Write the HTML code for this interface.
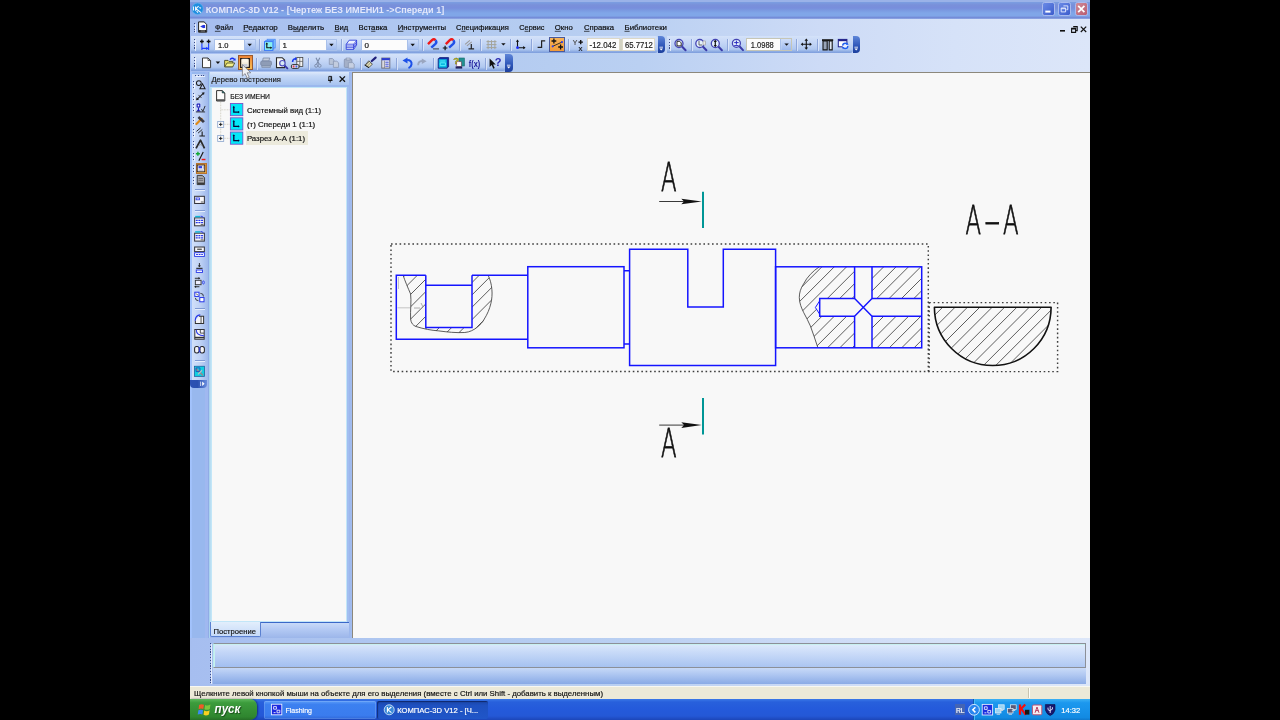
<!DOCTYPE html>
<html lang="ru">
<head>
<meta charset="utf-8">
<title>КОМПАС-3D V12</title>
<style>
html,body{margin:0;padding:0;background:#000;}
body{width:1280px;height:720px;overflow:hidden;position:relative;font-family:"Liberation Sans",sans-serif;font-size:8px;color:#000;}
.a{position:absolute;}
#title{left:190px;top:0;width:900px;height:19px;background:linear-gradient(to bottom,#9ab2e8 0,#9ab2e8 1.5px,#7b9ce0 2.5px,#7990da 5px,#788edc 8px,#7a98e0 10px,#80a6e8 13px,#80a6e8 16px,#748cd8 17.3px,#748cd8 18.2px,#a8c0ee 19px);}
#winbg{left:190px;top:19px;width:900px;height:667px;background:#a0baf0;}
#band{left:190px;top:19px;width:900px;height:53px;background:linear-gradient(to right,#a6bef0 0,#b2caf0 30%,#bad0f2 50%,#cddbf6 70%,#d6e2f8 85%,#dce6f9 100%);}
.tb{border-radius:0 3px 3px 0;background:linear-gradient(to bottom,#d4e2f9 0,#c4d6f6 40%,#b0c8f0 78%,#90aee4 90%,#7c9cdc 100%);}
.cap{border-radius:0 4px 4px 0;background:linear-gradient(to bottom,#5f86d8 0,#2c55b8 60%,#1c3f9c 100%);}
.inp{background:#fcfcfc;border:1px solid #a8c0ea;box-sizing:border-box;}
.dd{background:linear-gradient(to bottom,#cfdefa,#9db9ee);border:1px solid #a8c0ea;border-left:none;box-sizing:border-box;}
.sep{width:0.9px;background:#8ea6da;box-shadow:0.8px 0 0 #e0e9fb;}
.hsep{height:1px;background:#7f9ad4;box-shadow:0 1px 0 #e6eefc;}
.hot{background:#f8a848;border:1px solid #b86420;box-sizing:border-box;}
.grip{width:1.3px;background:repeating-linear-gradient(to bottom,#3c4c88 0,#3c4c88 1.3px,transparent 1.3px,transparent 2.8px);box-shadow:1px 1px 0 rgba(255,255,255,.7);}
.hgrip{height:1.3px;background:repeating-linear-gradient(to right,#3c4c88 0,#3c4c88 1.3px,transparent 1.3px,transparent 2.8px);box-shadow:1px 1px 0 rgba(255,255,255,.7);}
#left{left:190px;top:72px;width:20px;height:614px;background:linear-gradient(to right,#a2c2fc 0,#a2c2fc 1.4px,#98b8ee 2px,#98b8ee 14.5px,#a0b8f0 15px,#a0b8f0 18px,#90ace6 18.3px,#90ace6 19.2px,#a0c4ec 19.6px);}
#ltb{left:192px;top:74px;width:16px;height:308px;background:linear-gradient(to right,#d2e0f9 0,#bfd2f5 50%,#9fb9ec 100%);}
#draw{left:352.2px;top:72px;width:737.8px;height:566px;background:#f8f8f8;border-left:1px solid #8c887c;border-top:1px solid #8c887c;box-sizing:border-box;}
#status{left:190px;top:686px;width:900px;height:13px;background:#ece9d8;}
#task{left:190px;top:699px;width:900px;height:21px;background:linear-gradient(to bottom,#3a78e8 0,#2860dc 3px,#245adb 10px,#2458d6 17px,#1c46b8 21px);}
svg text{font-family:"Liberation Sans",sans-serif;}
</style>
</head>
<body>
<div class="a" id="title"></div>
<div class="a" id="winbg"></div>
<div class="a" id="band"></div>
<div class="a" id="left"></div>
<div class="a" id="ltb"></div>
<div class="a" id="draw"></div>
<div class="a" id="status"></div>
<div class="a" id="task"></div>
<div class="a " style="left:1041.8px;top:2.3px;width:13.3px;height:13.3px;border-radius:2.5px;border:1px solid #a9baee;box-sizing:border-box;background:linear-gradient(135deg,#6a8ae6,#3c5ccc);"></div>
<div class="a " style="left:1058.2px;top:2.3px;width:13.3px;height:13.3px;border-radius:2.5px;border:1px solid #a9baee;box-sizing:border-box;background:linear-gradient(135deg,#6a8ae6,#3c5ccc);"></div>
<div class="a " style="left:1074.6px;top:2.3px;width:13.3px;height:13.3px;border-radius:2.5px;border:1px solid #a9baee;box-sizing:border-box;background:linear-gradient(135deg,#d08a98,#b85c70);"></div>
<div class="a grip" style="left:193.5px;top:22.8px;width:1.3px;height:9.6px;"></div>
<div class="a tb" style="left:191px;top:35.8px;width:467px;height:17.5px;"></div>
<div class="a cap" style="left:657.5px;top:35.6px;width:7.5px;height:17.9px;"></div>
<div class="a tb" style="left:666.6px;top:35.8px;width:186.4px;height:17.5px;"></div>
<div class="a cap" style="left:852.5px;top:35.6px;width:7.5px;height:17.9px;"></div>
<div class="a tb" style="left:191px;top:53.7px;width:314.5px;height:17.8px;"></div>
<div class="a cap" style="left:505px;top:53.7px;width:7.5px;height:18px;"></div>
<div class="a grip" style="left:193.5px;top:39.4px;width:1.3px;height:10.4px;"></div>
<div class="a grip" style="left:668.6px;top:39.4px;width:1.3px;height:10.4px;"></div>
<div class="a grip" style="left:193.5px;top:57.4px;width:1.3px;height:10.4px;"></div>
<div class="a inp" style="left:214px;top:38.5px;width:30.5px;height:12.5px;"></div>
<div class="a dd" style="left:244.5px;top:38.5px;width:11px;height:12.5px;"></div>
<div class="a inp" style="left:278.5px;top:38.5px;width:48px;height:12.5px;"></div>
<div class="a dd" style="left:326.5px;top:38.5px;width:10.5px;height:12.5px;"></div>
<div class="a inp" style="left:360.5px;top:38.5px;width:47px;height:12.5px;"></div>
<div class="a dd" style="left:407.5px;top:38.5px;width:11px;height:12.5px;"></div>
<div class="a " style="left:619px;top:38.5px;width:4px;height:12.5px;background:#d2d2c2;"></div>
<div class="a inp" style="left:587px;top:37.9px;width:32.6px;height:13px;"></div>
<div class="a inp" style="left:622.4px;top:37.9px;width:32.6px;height:13px;"></div>
<div class="a inp" style="left:746.3px;top:37.6px;width:35.2px;height:13.6px;"></div>
<div class="a dd" style="left:781.5px;top:37.6px;width:10.8px;height:13.6px;"></div>
<div class="a " style="left:587px;top:37.9px;width:32.6px;height:13px;border:1px solid #dcd8c8;box-sizing:border-box;"></div>
<div class="a " style="left:622.4px;top:37.9px;width:32.6px;height:13px;border:1px solid #dcd8c8;box-sizing:border-box;"></div>
<div class="a " style="left:746.3px;top:37.6px;width:46px;height:13.6px;border:1px solid #c6c6b6;box-sizing:border-box;"></div>
<div class="a sep" style="left:259px;top:39px;width:1px;height:12px;"></div>
<div class="a sep" style="left:340.75px;top:39px;width:1px;height:12px;"></div>
<div class="a sep" style="left:422px;top:39px;width:1px;height:12px;"></div>
<div class="a sep" style="left:458.75px;top:39px;width:1px;height:12px;"></div>
<div class="a sep" style="left:479.5px;top:39px;width:1px;height:12px;"></div>
<div class="a sep" style="left:509.75px;top:39px;width:1px;height:12px;"></div>
<div class="a sep" style="left:531px;top:39px;width:1px;height:12px;"></div>
<div class="a sep" style="left:567.5px;top:39px;width:1px;height:12px;"></div>
<div class="a sep" style="left:690.5px;top:39px;width:1px;height:12px;"></div>
<div class="a sep" style="left:727px;top:39px;width:1px;height:12px;"></div>
<div class="a sep" style="left:796px;top:39px;width:1px;height:12px;"></div>
<div class="a sep" style="left:816.5px;top:39px;width:1px;height:12px;"></div>
<div class="a sep" style="left:256px;top:57.5px;width:1px;height:12px;"></div>
<div class="a sep" style="left:307.5px;top:57.5px;width:1px;height:12px;"></div>
<div class="a sep" style="left:359.5px;top:57.5px;width:1px;height:12px;"></div>
<div class="a sep" style="left:395.5px;top:57.5px;width:1px;height:12px;"></div>
<div class="a sep" style="left:432.5px;top:57.5px;width:1px;height:12px;"></div>
<div class="a sep" style="left:485px;top:57.5px;width:1px;height:12px;"></div>
<div class="a hot" style="left:549.4px;top:37.1px;width:15.4px;height:14.9px;border-color:#4a5a9c;background:linear-gradient(to bottom,#f8b458,#f09a3a);"></div>
<div class="a hot" style="left:237.6px;top:55.4px;width:15px;height:14.6px;border:0.6px solid #9a5a30;background:linear-gradient(to bottom,#ee8434 0,#f29a40 35%,#f8be54 100%);"></div>
<div class="a hgrip" style="left:194.7px;top:74.8px;width:9.8px;height:1.3px;"></div>
<div class="a grip" style="left:193.3px;top:81.1px;width:1px;height:7px;"></div>
<div class="a grip" style="left:193.3px;top:92.8px;width:1px;height:7px;"></div>
<div class="a grip" style="left:193.3px;top:104.39999999999999px;width:1px;height:7px;"></div>
<div class="a grip" style="left:193.3px;top:116.89999999999999px;width:1px;height:7px;"></div>
<div class="a grip" style="left:193.3px;top:128.6px;width:1px;height:7px;"></div>
<div class="a grip" style="left:193.3px;top:140.79999999999998px;width:1px;height:7px;"></div>
<div class="a grip" style="left:193.3px;top:152.79999999999998px;width:1px;height:7px;"></div>
<div class="a grip" style="left:193.3px;top:164.9px;width:1px;height:7px;"></div>
<div class="a grip" style="left:193.3px;top:176.6px;width:1px;height:7px;"></div>
<div class="a hot" style="left:195.7px;top:162.8px;width:11.2px;height:11.2px;border:0.7px solid #b8742c;background:linear-gradient(to bottom,#f09a38,#f8b84c);"></div>
<div class="a hsep" style="left:194.5px;top:189px;width:10px;height:1px;"></div>
<div class="a hsep" style="left:194.5px;top:210.2px;width:10px;height:1px;"></div>
<div class="a hsep" style="left:194.5px;top:308.4px;width:10px;height:1px;"></div>
<div class="a hsep" style="left:194.5px;top:360.4px;width:10px;height:1px;"></div>
<div class="a " style="left:190px;top:379.6px;width:17.2px;height:8.6px;border-radius:0 0 4px 4px;background:linear-gradient(to right,#2c52b4 0,#2a50b0 45%,#6a8ede 100%);"></div>
<div class="a " style="left:209.2px;top:72px;width:140px;height:566px;background:linear-gradient(to right,#a2ceec 0,#c8e8f6 2.4px,#d8f0fa 3px,#a6c2f0 3.2px);"></div>
<div class="a " style="left:212px;top:72px;width:137.2px;height:566px;background:#a2bef0;"></div>
<div class="a " style="left:209.6px;top:71.8px;width:139.6px;height:12.8px;background:linear-gradient(to bottom,#dce8fb 0,#c4d8f7 30%,#a8c4f0 100%);"></div>
<div class="a " style="left:209.6px;top:84.6px;width:139.6px;height:2.2px;background:#9ab8ee;"></div>
<div class="a " style="left:211.4px;top:86.8px;width:135.8px;height:535.6px;background:#f8f8f8;border:1.4px solid #c2e6f8;border-left-width:0.8px;box-sizing:border-box;"></div>
<div class="a " style="left:245.7px;top:131.4px;width:62.6px;height:13.4px;background:#eceadc;"></div>
<div class="a " style="left:209.6px;top:622.6px;width:139.6px;height:15px;background:linear-gradient(to bottom,#c8daf8 0,#b4caf4 40%,#9cb6ea 100%);"></div>
<div class="a " style="left:209.6px;top:622.4px;width:139.6px;height:1px;background:#3a68c8;"></div>
<div class="a " style="left:210.4px;top:622.4px;width:50.6px;height:15px;background:linear-gradient(to bottom,#e2eefc,#c6daf8);border:1px solid #5a80d0;border-top:none;box-sizing:border-box;border-radius:0 0 2px 2px;"></div>
<div class="a " style="left:349.2px;top:72px;width:3.2px;height:566px;background:linear-gradient(to right,#9ab6ec,#a4bef0);"></div>
<div class="a " style="left:190px;top:637.6px;width:900px;height:48.4px;background:linear-gradient(to right,#a6bef0 0,#b2caf0 30%,#bad0f2 50%,#cddbf6 70%,#d6e2f8 85%,#dde7f9 100%);"></div>
<div class="a " style="left:213px;top:643.2px;width:872.6px;height:24.6px;box-sizing:border-box;border:1px solid #8c9098;border-left-color:#b8ecec;background:linear-gradient(to bottom,rgba(226,238,253,.85) 0,rgba(205,222,250,.75) 35%,rgba(160,190,240,.75) 100%);box-shadow:inset 1px 1px 0 #c8f0f0;"></div>
<div class="a " style="left:213px;top:668px;width:872.6px;height:15.6px;background:linear-gradient(to bottom,rgba(200,218,248,.9) 0,rgba(168,194,240,.85) 45%,rgba(132,166,228,.9) 100%);"></div>
<div class="a grip" style="left:210.2px;top:643px;width:1px;height:40px;"></div>
<div class="a " style="left:190px;top:685.6px;width:900px;height:1px;background:#f8f8f2;"></div>
<div class="a " style="left:1029px;top:688px;width:1px;height:10px;background:#fdfdf8;box-shadow:-1px 0 0 #c8c4b0;"></div>
<div class="a " style="left:190px;top:699.4px;width:67px;height:20.6px;border-radius:0 7px 7px 0;background:linear-gradient(to bottom,#5cb85c 0,#3c9c3c 18%,#358f35 55%,#2f862f 85%,#266e26 100%);box-shadow:1px 0 2px rgba(0,0,40,.5);"></div>
<div class="a " style="left:264.3px;top:701px;width:111.4px;height:18.2px;border-radius:2px;background:linear-gradient(to bottom,#5c9cf8 0,#3c80f0 20%,#3a7cee 80%,#3068d8 100%);box-shadow:inset 0 0 0 0.6px rgba(255,255,255,.25);"></div>
<div class="a " style="left:376.8px;top:701px;width:111.4px;height:18.2px;border-radius:2px;background:linear-gradient(to bottom,#1a46a8 0,#1e50c0 25%,#2056c8 100%);box-shadow:inset 1px 1px 1px rgba(0,0,30,.45);"></div>
<div class="a " style="left:973.8px;top:699.4px;width:116.2px;height:20.6px;background:linear-gradient(to bottom,#3cb0f4 0,#1c98ee 18%,#1690e8 60%,#128ae2 88%,#0f78cc 100%);box-shadow:-1px 0 0 #0c5cb0, inset 1px 0 0 #48b8f8;"></div>
<div class="a " style="left:955.4px;top:704.4px;width:9.8px;height:10.4px;background:#4464b4;"></div>
<svg class="a" style="left:0;top:0;will-change:transform" width="1280" height="720" viewBox="0 0 1280 720">
<text x="205.8" y="13" font-size="9.9" fill="#e2e7fb" textLength="238.4" lengthAdjust="spacingAndGlyphs" font-weight="bold" >КОМПАС-3D V12 - [Чертеж БЕЗ ИМЕНИ1 -&gt;Спереди 1]</text>
<circle cx="197.5" cy="8.7" r="5.7" fill="#1f8ee0" stroke="#6ab8f0" stroke-width="0.6"/><path d="M193.4,6.6 v4 M195.6,6.4 v4.4 M198.6,6.2 l-2.6,2.4 l5,4 M196.6,11 l1.4,1.6 M199.4,7.4 l1.6,0.8" fill="none" stroke="#f4f8ff" stroke-width="1.1"/>
<rect x="1045.3" y="10.6" width="5.2" height="2" fill="#fff"/>
<path d="M1063.4,5.9 h4.4 v3.8 h-1.4 M1061.2,8 h4.4 v3.9 h-4.4 z M1061.2,8.7 h4.4" fill="none" stroke="#e4eaff" stroke-width="0.95"/>
<path d="M1078.2,5.8 L1084.4,12.2 M1084.4,5.8 L1078.2,12.2" stroke="#fff" stroke-width="1.7" fill="none"/>
<rect x="1060" y="30" width="5" height="1.6" fill="#111"/>
<path d="M1073.2,26.6 h4 v4 h-1 M1071.6,28.4 h4 v4 h-4 z M1071.6,29 h4" fill="none" stroke="#111" stroke-width="1.1"/>
<path d="M1080.8,26.6 L1086.2,32 M1086.2,26.6 L1080.8,32" stroke="#111" stroke-width="1.2" fill="none"/>
<text x="214.9" y="30.1" font-size="8" fill="#0a0a0a" textLength="18.3" lengthAdjust="spacingAndGlyphs" stroke="#0a0a0a" stroke-width="0.18" >Файл</text>
<path d="M214.90,31.3 H220.57" stroke="#0a0a0a" stroke-width="0.7"/>
<text x="243.3" y="30.1" font-size="8" fill="#0a0a0a" textLength="34.5" lengthAdjust="spacingAndGlyphs" stroke="#0a0a0a" stroke-width="0.18" >Редактор</text>
<path d="M243.30,31.3 H248.29" stroke="#0a0a0a" stroke-width="0.7"/>
<text x="287.8" y="30.1" font-size="8" fill="#0a0a0a" textLength="36.3" lengthAdjust="spacingAndGlyphs" stroke="#0a0a0a" stroke-width="0.18" >Выделить</text>
<path d="M293.04,31.3 H298.71" stroke="#0a0a0a" stroke-width="0.7"/>
<text x="334.5" y="30.1" font-size="8" fill="#0a0a0a" textLength="13.7" lengthAdjust="spacingAndGlyphs" stroke="#0a0a0a" stroke-width="0.18" >Вид</text>
<path d="M334.50,31.3 H339.55" stroke="#0a0a0a" stroke-width="0.7"/>
<text x="358.6" y="30.1" font-size="8" fill="#0a0a0a" textLength="28.8" lengthAdjust="spacingAndGlyphs" stroke="#0a0a0a" stroke-width="0.18" >Вставка</text>
<path d="M371.10,31.3 H375.41" stroke="#0a0a0a" stroke-width="0.7"/>
<text x="397.8" y="30.1" font-size="8" fill="#0a0a0a" textLength="48.2" lengthAdjust="spacingAndGlyphs" stroke="#0a0a0a" stroke-width="0.18" >Инструменты</text>
<path d="M397.80,31.3 H403.36" stroke="#0a0a0a" stroke-width="0.7"/>
<text x="456" y="30.1" font-size="8" fill="#0a0a0a" textLength="52.8" lengthAdjust="spacingAndGlyphs" stroke="#0a0a0a" stroke-width="0.18" >Спецификация</text>
<path d="M461.42,31.3 H465.50" stroke="#0a0a0a" stroke-width="0.7"/>
<text x="519.3" y="30.1" font-size="8" fill="#0a0a0a" textLength="25.1" lengthAdjust="spacingAndGlyphs" stroke="#0a0a0a" stroke-width="0.18" >Сервис</text>
<path d="M524.58,31.3 H528.67" stroke="#0a0a0a" stroke-width="0.7"/>
<text x="554.8" y="30.1" font-size="8" fill="#0a0a0a" textLength="18.0" lengthAdjust="spacingAndGlyphs" stroke="#0a0a0a" stroke-width="0.18" >Окно</text>
<path d="M554.80,31.3 H560.84" stroke="#0a0a0a" stroke-width="0.7"/>
<text x="584" y="30.1" font-size="8" fill="#0a0a0a" textLength="30.1" lengthAdjust="spacingAndGlyphs" stroke="#0a0a0a" stroke-width="0.18" >Справка</text>
<path d="M584.00,31.3 H589.54" stroke="#0a0a0a" stroke-width="0.7"/>
<text x="624.5" y="30.1" font-size="8" fill="#0a0a0a" textLength="42.5" lengthAdjust="spacingAndGlyphs" stroke="#0a0a0a" stroke-width="0.18" >Библиотеки</text>
<path d="M624.50,31.3 H629.65" stroke="#0a0a0a" stroke-width="0.7"/>
<path d="M659.4000000000001,47.2 h3.6" stroke="#fff" stroke-width="0.8"/><path d="M659.4000000000001,48.6 h3.6 l-1.8,2 z" fill="#fff"/>
<path d="M854.4000000000001,47.2 h3.6" stroke="#fff" stroke-width="0.8"/><path d="M854.4000000000001,48.6 h3.6 l-1.8,2 z" fill="#fff"/>
<path d="M506.9,65.2 h3.6" stroke="#fff" stroke-width="0.8"/><path d="M506.9,66.6 h3.6 l-1.8,2 z" fill="#fff"/>
<path d="M247.5,43.75 h4.4 l-2.2,2.4 z" fill="#111"/>
<path d="M329.25,43.75 h4.4 l-2.2,2.4 z" fill="#111"/>
<path d="M410.5,43.75 h4.4 l-2.2,2.4 z" fill="#111"/>
<path d="M784.4,43.4 h4.4 l-2.2,2.4 z" fill="#111"/>
<text x="218" y="47.8" font-size="8" fill="#111" textLength="10.5" lengthAdjust="spacingAndGlyphs" stroke="#111" stroke-width="0.18" >1.0</text>
<text x="282.5" y="47.8" font-size="8" fill="#111" stroke="#111" stroke-width="0.18" >1</text>
<text x="364.5" y="47.8" font-size="8" fill="#111" stroke="#111" stroke-width="0.18" >0</text>
<text x="589.6" y="47.5" font-size="8.5" fill="#222" textLength="26.7" lengthAdjust="spacingAndGlyphs" stroke="#222" stroke-width="0.18" >-12.042</text>
<text x="624.9" y="47.5" font-size="8.5" fill="#222" textLength="28" lengthAdjust="spacingAndGlyphs" stroke="#222" stroke-width="0.18" >65.7712</text>
<text x="750.8" y="47.5" font-size="8.5" fill="#222" textLength="23" lengthAdjust="spacingAndGlyphs" stroke="#222" stroke-width="0.18" >1.0988</text>
<g transform="translate(198.1,21.4)"><path d="M0.5,0.5 H6 L8.6,3 V10.8 H0.5 Z" fill="#fdfdf8" stroke="#222" stroke-width="1"/><path d="M1,8.6 H8.2 V10.6 H1 Z" fill="#222"/><path d="M2,5 L5.4,3.4 V6.8 Z M5.4,3.6 h1.6 v3 h-1.6 z" fill="#2838e0"/><path d="M2.4,9.6 h4.6" stroke="#ddd" stroke-width="0.6"/></g>
<g transform="translate(199,39)"><path d="M2.9,0.6 v3.8 M1,2.5 h3.8 M9.6,0.6 v3.8 M7.7,2.5 h3.8" stroke="#111" stroke-width="1.3"/><path d="M2.9,4.4 V11 M9.6,4.4 V11 M2.9,9.4 H9.6" stroke="#1c3cff" stroke-width="1.1" fill="none"/><path d="M9.6,9.4 l-2.6,-1.5 v3 z" fill="#1c3cff"/></g>
<g transform="translate(264,38.8)"><rect x="3.2" y="0.5" width="8" height="8.6" fill="#9adcf8" stroke="#4f8cf8" stroke-width="0.9"/><rect x="1.8" y="1.6" width="8" height="8.6" fill="#8ee6f6" stroke="#4f8cf8" stroke-width="0.9"/><rect x="0.5" y="2.8" width="8.4" height="8.8" fill="#86f0f0" stroke="#3c78f8" stroke-width="1"/><path d="M2.8,4.6 V9 H7.2" stroke="#111" stroke-width="1.1" fill="none"/><path d="M2.8,3.6 l-1.3,1.8 h2.6 z M8.2,9 l-1.8,-1.3 v2.6 z" fill="#111"/></g>
<g transform="translate(345.6,39.2)"><path d="M0.6,10.2 V5.2 L3.6,1 H11 V6 L8,10.2 Z" fill="#eef2ff" stroke="#2030d8" stroke-width="0.8"/><path d="M0.6,5 H8 L11,1.2 M0.6,6.8 H8 L11,3 M0.6,8.5 H8 L11,4.7 M8,5 V10.2" fill="none" stroke="#2030d8" stroke-width="0.75"/></g>
<g transform="translate(427,39)"><path d="M1,5.2 L5,1.2 Q6.9,-0.5 8.5,1.2" fill="none" stroke="#f01818" stroke-width="2.4" stroke-linecap="butt"/><path d="M8.5,1.2 Q10.2,3 8.4,4.8 L4.3,8.6" fill="none" stroke="#2050e8" stroke-width="2.4"/><path d="M6.4,9.9 h1.2 m0.8,0 h1.2 m0.8,0 h1.2" stroke="#111" stroke-width="1.1"/></g>
<g transform="translate(444.8,39)"><path d="M1,5.2 L5,1.2 Q6.9,-0.5 8.5,1.2" fill="none" stroke="#f01818" stroke-width="2.4" stroke-linecap="butt"/><path d="M8.5,1.2 Q10.2,3 8.4,4.8 L4.3,8.6" fill="none" stroke="#2050e8" stroke-width="2.4"/><path d="M-2,9 h4.6 M0.3,6.7 v4.6" stroke="#111" stroke-width="1.2"/></g>
<g transform="translate(464.5,39.5)"><path d="M0.6,4.8 L5.4,0.8 M2.4,6.4 L7.2,2.4" stroke="#9a9a9a" stroke-width="1.1"/><path d="M6.8,4.4 V9.3 M4,9.3 H9.6" stroke="#222" stroke-width="1.2"/></g>
<g transform="translate(486.5,40.2)"><path d="M0,1.4 H10 M0,4.4 H10 M0,7.4 H10 M1.6,0 V9 M5,0 V9 M8.4,0 V9" stroke="#a4a49a" stroke-width="1"/></g>
<path d="M501.2,43.2 h4.4 l-2.2,2.4 z" fill="#111"/>
<g transform="translate(515,39)"><path d="M2.5,8.7 V1.6 M2.5,8.7 H9.6" stroke="#111" stroke-width="1.1" fill="none"/><path d="M2.5,0.4 l-1.6,2.4 h3.2 z M10.6,8.7 l-2.4,-1.6 v3.2 z" fill="#111"/><circle cx="2.5" cy="8.7" r="1.4" fill="#2030ff"/></g>
<path d="M537.6,47.4 H541.6 V40.8 H545.2" fill="none" stroke="#222" stroke-width="1.2"/>
<path d="M552.7,46.3 L562,42.1" stroke="#222" stroke-width="0.9"/><path d="M553.9,38.6 v4.8 M551.5,41 h4.8 M560.6,44.6 v4.8 M558.2,47 h4.8" stroke="#111" stroke-width="1.3"/><circle cx="552.7" cy="46.3" r="1.1" fill="#3040e8"/><circle cx="562" cy="42.1" r="1.1" fill="#3040e8"/>
<text x="572.8" y="44.6" font-size="6.8" fill="#444" stroke="#444" stroke-width="0.18" >Y</text>
<text x="578.6" y="50.8" font-size="7.8" fill="#111" stroke="#111" stroke-width="0.18" >x</text>
<path d="M580.7,39.9 v4.4 M578.5,42.1 h4.4" stroke="#111" stroke-width="1.4"/>
<g><path d="M682,46.5 L685.6,50.3" stroke="#3a3aa8" stroke-width="2" stroke-linecap="round"/><circle cx="679" cy="43.5" r="4" fill="#e4f0fc" stroke="#4444b4" stroke-width="1.3"/><path d="M677,41.3 h2.6 l1.6,1.6 v3 h-4.2 z" fill="#fff" stroke="#111" stroke-width="0.9"/></g>
<g><path d="M702.8,46.5 L706.4,50.3" stroke="#3a3aa8" stroke-width="2" stroke-linecap="round"/><circle cx="699.8" cy="43.5" r="4" fill="#e4f0fc" stroke="#4444b4" stroke-width="1.3"/><path d="M699,41 v4 h3" stroke="#555" stroke-width="0.9" fill="none"/><rect x="703" y="41" width="2.6" height="4" fill="#e8e8e8" stroke="#888" stroke-width="0.5"/></g>
<g><path d="M718.3,46.5 L721.9,50.3" stroke="#3a3aa8" stroke-width="2" stroke-linecap="round"/><circle cx="715.3" cy="43.5" r="4" fill="#e4f0fc" stroke="#4444b4" stroke-width="1.3"/><path d="M715.3,40.4 v6.2" stroke="#111" stroke-width="1.2"/><path d="M715.3,39.9 l-1.6,2 h3.2 z M715.3,47.1 l-1.6,-2 h3.2 z" fill="#111"/></g>
<g><path d="M739.4,46.3 L743.0,50.099999999999994" stroke="#3a3aa8" stroke-width="2" stroke-linecap="round"/><circle cx="736.4" cy="43.3" r="4" fill="#e4f0fc" stroke="#4444b4" stroke-width="1.3"/><path d="M734.2,42.6 h4.4 M736.4,40.6 v4 M734.2,45.6 h4.4" stroke="#2a2ac0" stroke-width="1"/></g>
<g transform="translate(806.3,44.2)"><path d="M-4,0 H4 M0,-4 V4" stroke="#111" stroke-width="1.1"/><path d="M-5.6,0 l2.2,-1.8 v3.6 z M5.6,0 l-2.2,-1.8 v3.6 z M0,-5.6 l-1.8,2.2 h3.6 z M0,5.6 l-1.8,-2.2 h3.6 z" fill="#111"/></g>
<g transform="translate(822,38.9)"><path d="M0,0.3 H11.2 V2.2 H0 Z" fill="#161616"/><path d="M1,2 H5.2 V11 H1 Z" fill="#98a4b8" stroke="#161616" stroke-width="1.1"/><path d="M7.2,2 H10.2 V11 H7.2 Z" fill="#dfe6f2" stroke="#161616" stroke-width="1.1"/></g>
<g transform="translate(837.8,38.9)"><rect x="0.5" y="0.5" width="8.6" height="7.4" fill="#fff" stroke="#20208a" stroke-width="1"/><rect x="0.5" y="0.5" width="8.6" height="1.8" fill="#20208a"/><circle cx="7.4" cy="7" r="2.6" fill="#eaf0ff" stroke="#2060f0" stroke-width="1.4" stroke-dasharray="6 2.2"/><path d="M9.4,3.6 l1.4,2.2 h-2.6 z M5.2,10.4 l-1.2,-2.2 h2.6 z" fill="#2060f0"/></g>
<g transform="translate(202,57.5)"><path d="M0.5,0.5 H6 L8.6,3 V10.2 H0.5 Z" fill="#fdfdfd" stroke="#3a3a3a" stroke-width="1"/><path d="M6,0.5 V3 H8.6" fill="none" stroke="#3a3a3a" stroke-width="0.8"/></g>
<path d="M215.6,61.6 h4.6 l-2.3,2.5 z" fill="#111"/>
<g transform="translate(224,57)"><path d="M0.6,3.4 H4 L5,4.4 H8.8 V9.8 H0.6 Z" fill="#e4dc64" stroke="#4a4a2a" stroke-width="0.9"/><path d="M0.8,9.8 L3,6 H10.8 L8.6,9.8 Z" fill="#f4f08c" stroke="#4a4a2a" stroke-width="0.8"/><path d="M6,2.6 Q8,0 10.2,2" fill="none" stroke="#1830f0" stroke-width="1.5"/><path d="M11.8,3.6 l-3,-0.2 l2.4,-2.4 z" fill="#1830f0"/></g>
<g transform="translate(240,58)"><rect x="0.6" y="0.6" width="8.8" height="8.8" fill="#f4ecdc" stroke="#2a2018" stroke-width="1.2"/><rect x="2.2" y="0.8" width="5.6" height="3.6" fill="#fcf6ea"/><rect x="2.6" y="6" width="4.8" height="3.2" fill="#c8ccd8"/></g>
<g transform="translate(260.2,57.6)"><path d="M3,0.4 H9.6 L8.6,3.4 H2.4 Z" fill="#c6cedc" stroke="#7a88a4" stroke-width="0.8"/><rect x="0.5" y="3.4" width="10.8" height="4.6" rx="1.4" fill="#8e9cb6" stroke="#7a88a4" stroke-width="0.8"/><path d="M1.6,8 H10.2 V9.8 H1.6 Z" fill="#a8b4c8" stroke="#7a88a4" stroke-width="0.7"/></g>
<g transform="translate(276,57.2)"><path d="M0.5,0.5 H6.2 L8.6,2.8 V10.4 H0.5 Z" fill="#f8f8f8" stroke="#2a2a2a" stroke-width="1.1"/><path d="M8.2,8 L11.4,11.2" stroke="#3434a8" stroke-width="1.8" stroke-linecap="round"/><circle cx="6.4" cy="6" r="2.7" fill="#d8eaf4" stroke="#5050c0" stroke-width="1.2"/></g>
<g transform="translate(291,57)"><rect x="5.8" y="0.4" width="6" height="9" fill="#f4f4f4" stroke="#444" stroke-width="0.8"/><path d="M8.8,0.4 V9.4 M5.8,4.4 H11.8" stroke="#555" stroke-width="0.7"/><path d="M1.6,5 Q1.6,1.6 5,1.8" fill="none" stroke="#1838f0" stroke-width="1.6"/><path d="M6.2,1.8 l-2.2,-1.8 v3.6 z" fill="#1838f0"/><rect x="0.4" y="7.6" width="7.6" height="3.8" rx="1.2" fill="#d8dce8" stroke="#333" stroke-width="1"/><circle cx="2.6" cy="9.5" r="0.9" fill="#f03050"/><circle cx="5.4" cy="9.5" r="0.9" fill="#4060f0"/></g>
<g transform="translate(314.4,57.8)"><path d="M1.6,0 L4.8,6.4 M5.4,0 L2.2,6.4" stroke="#7a8aa8" stroke-width="1.1"/><circle cx="1.8" cy="8" r="1.5" fill="none" stroke="#7a8aa8" stroke-width="0.9"/><circle cx="5.2" cy="8" r="1.5" fill="none" stroke="#7a8aa8" stroke-width="0.9"/></g>
<g transform="translate(328.8,58)"><path d="M0.5,0.5 H3.6 L5.2,2 V6.4 H0.5 Z" fill="#b8c4d8" stroke="#8a98b4" stroke-width="0.8"/><path d="M4.6,3.2 H8 L9.8,4.8 V9.4 H4.6 Z" fill="#c2ccde" stroke="#8a98b4" stroke-width="0.8"/></g>
<g transform="translate(343.8,57.6)"><rect x="0.5" y="1.4" width="7.6" height="8.4" rx="1" fill="#a4b0c8" stroke="#8492ae" stroke-width="0.8"/><rect x="2.4" y="0.4" width="3.8" height="2" fill="#c8d0e0" stroke="#8492ae" stroke-width="0.6"/><path d="M4.6,5 H8.8 L10.4,6.4 V10.6 H4.6 Z" fill="#c6d0e2" stroke="#8a98b4" stroke-width="0.8"/></g>
<g transform="translate(364.4,57)"><path d="M7.4,4 L11.2,0.6" stroke="#20207a" stroke-width="2.2" stroke-linecap="round"/><path d="M4.4,3.8 L8,7.2 L4.6,10.4 L0.6,8.2 Z" fill="#ece6b8" stroke="#333" stroke-width="0.8"/><path d="M1.4,8.4 L4.6,5 M3,9.2 L6,6" stroke="#555" stroke-width="0.6"/><path d="M0.2,8 L4.6,10.8" stroke="#222" stroke-width="1"/></g>
<g transform="translate(381.3,57.6)"><rect x="0.5" y="0.5" width="8" height="10" fill="#f0f0f4" stroke="#6a6a78" stroke-width="1"/><rect x="0.5" y="0.5" width="8" height="2.2" fill="#2a3ad0"/><path d="M3,3 V10.4" stroke="#6a6a78" stroke-width="0.8"/><path d="M4,4.6 h3.4 M4,6.6 h3.4 M4,8.6 h3.4" stroke="#3a4ad8" stroke-width="1"/></g>
<g transform="translate(402.5,57.5)"><path d="M4.6,2.6 Q9.6,2.6 9,7 Q8.6,9.6 6,10.6" fill="none" stroke="#1c50e8" stroke-width="2"/><path d="M0,3 L5,0 V6 Z" fill="#1c50e8"/></g>
<g transform="translate(417,58.6)"><path d="M5,2.4 Q1,2.6 1.2,6.6" fill="none" stroke="#9aa6c0" stroke-width="1.8"/><path d="M9.6,2.6 L4.8,-0.2 V5.4 Z" fill="#9aa6c0"/></g>
<g transform="translate(437.6,57.2)"><path d="M0.6,1.6 L2.2,0.4 H11 V9.6 L9.4,11 H0.6 Z" fill="#1430a8" stroke="#10207a" stroke-width="0.8"/><rect x="1.2" y="2" width="8" height="8.4" fill="#08b8e0"/><path d="M2.6,3.8 h5.2 M2.6,5.6 h5.2 v2.8 h-5.2 z" fill="none" stroke="#60f0ff" stroke-width="0.9"/></g>
<g transform="translate(453,57)"><rect x="6" y="1" width="5.4" height="8" fill="#209090" stroke="#186868" stroke-width="0.6"/><rect x="3.8" y="4.8" width="4.4" height="4.6" fill="#fafafa" stroke="#a03050" stroke-width="0.5"/><rect x="2.6" y="9.4" width="6.6" height="2.2" fill="#20205a"/></g>
<text x="453.2" y="64.4" font-size="9.5" fill="#d8d010" font-weight="bold" stroke="#555510" stroke-width="0.3">?</text>
<text x="468.8" y="66.6" font-size="9.5" fill="#1a1a9a" textLength="11.4" lengthAdjust="spacingAndGlyphs" font-weight="bold" >f(x)</text>
<g transform="translate(489.6,58.4)"><path d="M0,0 V8.6 L2.1,6.7 L3.7,10.3 L5.1,9.7 L3.5,6.2 H6.2 Z" fill="#111"/></g>
<text x="494.8" y="66.4" font-size="11" fill="#2828b0" font-weight="bold" >?</text>
<g transform="translate(242.4,64.6)"><path d="M0,0 V11.5 L2.7,9 L4.8,13.6 L6.8,12.7 L4.7,8.2 H8.4 Z" fill="#f4f4f4" fill-opacity="0.92" stroke="#7a7a80" stroke-width="0.8"/></g>
<g transform="translate(200.3,84.5) scale(0.92)"><circle cx="-1.6" cy="-1.6" r="2.6" fill="none" stroke="#1c1c1c" stroke-width="1.1"/><path d="M-0.4,4.6 L2.4,-0.8 L5.2,4.6 Z" fill="none" stroke="#1c1c1c" stroke-width="1.1"/></g>
<g transform="translate(200.3,96.2) scale(0.92)"><path d="M-3.6,3.4 L3.6,-3.4" stroke="#1c1c1c" stroke-width="1.2"/><path d="M-4.6,4.4 l0.6,-3.2 l2.6,2.6 z M4.6,-4.4 l-0.6,3.2 l-2.6,-2.6 z" fill="#1c1c1c"/><path d="M-2,-1.4 l3.4,3.4" stroke="#1c1c1c" stroke-width="0.8"/></g>
<g transform="translate(200.3,107.8) scale(0.92)"><rect x="-4" y="-4.6" width="4" height="4.4" rx="1" fill="#1a1ab8"/><rect x="-2.8" y="-3.4" width="1.6" height="2" fill="#f4f4ff"/><path d="M-2,-0.4 V2.4" stroke="#1a1ab8" stroke-width="1.1"/><path d="M-2,1.4 L-4.4,4 H0.4 Z" fill="#1a1ab8"/><path d="M1.2,1.2 L2.8,4 L5.2,-2" fill="none" stroke="#1c1c1c" stroke-width="0.95"/><path d="M-4.8,4.5 H5.2" stroke="#1c1c1c" stroke-width="0.9"/></g>
<g transform="translate(200.3,120.3) scale(0.92)"><path d="M-4.2,4 L1.4,-1.6" stroke="#e08a18" stroke-width="2.4" stroke-linecap="round"/><path d="M-1.2,-4.2 L4.6,0.8 L3,2.6 L-2.6,-2.4 Z" fill="#3a3a44" stroke="#222" stroke-width="0.5"/></g>
<g transform="translate(200.3,132) scale(0.92)"><path d="M-4.2,-0.6 L0.4,-4.6 M-2.4,1.2 L2.2,-2.8" stroke="#1c1c1c" stroke-width="1"/><path d="M2,-0.6 V4.2 M-1,4.4 H5" stroke="#1c1c1c" stroke-width="1.2"/></g>
<g transform="translate(200.3,144.2) scale(0.92)"><path d="M-4.6,4.6 L0.2,-4.4 L4.6,4.6" fill="none" stroke="#2c2c2c" stroke-width="1.9" stroke-linejoin="round"/><path d="M-2.2,1.6 Q0.2,-0.6 2.4,1.6" fill="none" stroke="#8a8a8a" stroke-width="0.8"/></g>
<g transform="translate(200.3,156.2) scale(0.92)"><path d="M-1.6,5 L3.2,-4.6" stroke="#1c1c1c" stroke-width="1.3"/><path d="M-4.8,-2.6 h4.4 M-2.6,-4.8 v4.4" stroke="#10a830" stroke-width="1.5"/><path d="M1.4,3.6 h4.2" stroke="#f01818" stroke-width="1.6"/></g>
<g transform="translate(200.70000000000002,168.3) scale(0.92)"><rect x="-3.8" y="-3.6" width="8.2" height="7.4" fill="#f6f4fa" stroke="#2a2222" stroke-width="1"/><rect x="-2.4" y="-2.4" width="3.8" height="2.4" fill="#3040e0"/><path d="M-2.6,2 h5.8 M2.8,-2.4 v3" stroke="#8a8aa0" stroke-width="0.8"/></g>
<g transform="translate(200.70000000000002,180) scale(0.92)"><path d="M-3.8,-5 H1.6 L4.2,-2.6 V5 H-3.8 Z" fill="#a4a4a8" stroke="#333" stroke-width="1"/><path d="M-3.4,2.8 H3.8 V4.8 H-3.4 Z" fill="#3a3a3a"/><path d="M-2.4,-1.6 h5 M-2.4,0.4 h5" stroke="#5a5a60" stroke-width="0.8"/></g>
<g transform="translate(199.4,199.8) scale(0.92)"><rect x="-5.2" y="-3.8" width="10.6" height="7.8" fill="#f6f6fa" stroke="#33333a" stroke-width="1.1"/><rect x="-3.6" y="-2" width="3.6" height="2" fill="none" stroke="#2838e8" stroke-width="0.9"/><path d="M1.6,2.4 h3" stroke="#555" stroke-width="1"/></g>
<g transform="translate(199.4,221.2) scale(0.92)"><rect x="-5.2" y="-3.6" width="10.6" height="8.6" fill="#f6f6fa" stroke="#33333a" stroke-width="1.1"/><path d="M-4,-1 h8 M-4,1.6 h8" stroke="#2838e8" stroke-width="1.4" stroke-dasharray="2.2 0.7"/><path d="M-4.6,-5 h5.4" stroke="#10b8d8" stroke-width="1.6"/><path d="M1.2,-5.4 q2.6,-0.4 3,1.8" fill="none" stroke="#2838e8" stroke-width="1"/><path d="M1.4,3.6 h3" stroke="#555" stroke-width="0.9"/></g>
<g transform="translate(199.4,236.5) scale(0.92)"><rect x="-5.2" y="-3.6" width="10.6" height="8.6" fill="#f6f6fa" stroke="#33333a" stroke-width="1.1"/><path d="M-4,-1 h8 M-4,1.6 h8" stroke="#2838e8" stroke-width="1.4" stroke-dasharray="2.2 0.7"/><path d="M-4.6,-5 h5.4" stroke="#10b8d8" stroke-width="1.6"/><path d="M1.2,-5.4 q2.6,-0.4 3,1.8" fill="none" stroke="#2838e8" stroke-width="1"/><path d="M1.4,3.6 h3" stroke="#555" stroke-width="0.9"/></g>
<g transform="translate(199.4,251.8) scale(0.92)"><rect x="-5.2" y="-5.2" width="10.6" height="5" fill="#f6f6fa" stroke="#33333a" stroke-width="1.1"/><path d="M-2.4,-2.8 h5" stroke="#333" stroke-width="1.2"/><rect x="-5.2" y="1" width="10.6" height="4" fill="#fff" stroke="#2838e8" stroke-width="1"/><path d="M-3.6,3 h7.4" stroke="#2838e8" stroke-width="1.2" stroke-dasharray="2 0.8"/></g>
<g transform="translate(199.4,268) scale(0.92)"><path d="M0,-5.4 V-2" stroke="#222" stroke-width="1"/><path d="M0,-0.8 l-1.8,-2 h3.6 z" fill="#222"/><path d="M-3.4,0.4 h6.8" stroke="#333" stroke-width="1.3"/><rect x="-3.4" y="2.2" width="6.8" height="2.6" fill="#fff" stroke="#2838e8" stroke-width="1"/></g>
<g transform="translate(199.4,282.5) scale(0.92)"><rect x="-4.4" y="-2.4" width="6.2" height="4.8" fill="#eef" stroke="#333" stroke-width="1"/><path d="M-5,-4.6 h5 M-5,4.6 h5" stroke="#222" stroke-width="1"/><path d="M1,-4.6 l-2,-1.3 v2.6 z M-5.6,4.6 l2,-1.3 v2.6 z" fill="#222"/><ellipse cx="4.4" cy="0" rx="1" ry="1.7" fill="none" stroke="#2838e8" stroke-width="0.9"/></g>
<g transform="translate(199.4,297) scale(0.92)"><rect x="-5" y="-5.2" width="4.6" height="4.6" fill="#fff" stroke="#2838e8" stroke-width="1.1"/><rect x="0.4" y="0.6" width="4.6" height="4.6" fill="#fff" stroke="#2838e8" stroke-width="1.1"/><path d="M1,-4 q3.6,0 3.4,3.4 M-1,4 q-3.4,0 -3.4,-3" fill="none" stroke="#222" stroke-width="0.9"/><path d="M-3.6,-3.8 l2,2" stroke="#222" stroke-width="0.9"/></g>
<g transform="translate(199.4,319.1) scale(0.92)"><path d="M-0.4,-3.2 H4.6 V4.8 H-4.4 V1.6" fill="#f4f4f8" stroke="#333" stroke-width="1.1"/><path d="M1.8,-3.2 V4.8" stroke="#333" stroke-width="0.9"/><path d="M-4.6,1.8 Q-4.4,-4.2 1,-4.6" fill="none" stroke="#2838e8" stroke-width="1.2"/></g>
<g transform="translate(199.4,334.4) scale(0.92)"><path d="M-5,-5.2 H5.2 V5.2 H-5 Z" fill="#f6f6fa" stroke="#33333a" stroke-width="1.1"/><path d="M-5,3.4 H5.2" stroke="#333" stroke-width="1.6"/><path d="M-3.4,-5 Q-3.4,1.4 5,1.4" fill="none" stroke="#2838e8" stroke-width="1.1"/><path d="M1,-5 V-1.4 H5" fill="none" stroke="#333" stroke-width="0.9"/></g>
<g transform="translate(199.4,349.7) scale(0.92)"><rect x="-5.2" y="-3.6" width="4.8" height="7.2" rx="2.2" fill="#f4f4f8" stroke="#222" stroke-width="1.1"/><rect x="0.6" y="-3.6" width="4.8" height="7.2" rx="2.2" fill="#f4f4f8" stroke="#222" stroke-width="1.1"/><path d="M-0.8,-3 Q1.6,0 -0.8,3 M1,-3 Q-1.4,0 1,3" fill="none" stroke="#2838e8" stroke-width="0.9"/></g>
<g transform="translate(199.4,371.2) scale(0.92)"><rect x="-5.4" y="-5.4" width="11" height="11" fill="#10d0e0" stroke="#1a5a9a" stroke-width="0.8"/><path d="M-3.4,-2.6 L3.4,4" stroke="#8a8e96" stroke-width="2" stroke-linecap="round"/><path d="M-3.6,-3.6 h4.2 v4 h-4.2 z" fill="none" stroke="#1a3ab8" stroke-width="0.8"/><path d="M-1.6,3.4 L2.8,-1" stroke="#b8bcc4" stroke-width="1.3"/></g>
<path d="M202.2,381.6 v4.4 l2.4,-2.2 z" fill="#fff"/><path d="M200.6,381.6 v4.4" stroke="#fff" stroke-width="0.7"/>
<text x="211.4" y="82" font-size="8" fill="#1a1a1a" textLength="69.4" lengthAdjust="spacingAndGlyphs" stroke="#1a1a1a" stroke-width="0.18" >Дерево построения</text>
<path d="M328.8,76.4 h2.8 v4 h-2.8 z M328,80.4 h4.6 M330.2,80.4 v2.2 M331,76.4 v4" fill="none" stroke="#111" stroke-width="0.9"/>
<path d="M339.6,76.4 L345,81.8 M345,76.4 L339.6,81.8" stroke="#111" stroke-width="1.3"/>
<path d="M220.7,102 V138.4 M220.7,109.8 H229.6 M223.8,124.3 H229.6 M223.8,138.3 H229.6" fill="none" stroke="#c4c0b0" stroke-width="0.8" stroke-dasharray="0.8 0.8"/>
<path d="M216.6,90.6 H222.2 L224.8,93 V101 H216.6 Z" fill="#fcfcfc" stroke="#333" stroke-width="1"/><path d="M217,99.2 H224.6 V101 H217 Z" fill="#555"/><path d="M222.2,90.6 V93 H224.8" fill="#1a6a6a" stroke="#333" stroke-width="0.6"/>
<text x="230.3" y="98.6" font-size="8" fill="#111" textLength="39.6" lengthAdjust="spacingAndGlyphs" stroke="#111" stroke-width="0.18" >БЕЗ ИМЕНИ</text>
<rect x="230.4" y="103.5" width="12.4" height="12.2" fill="#04e8f8" stroke="#7a52c8" stroke-width="0.9"/>
<path d="M233.8,106.9 V112.1 H238.4" fill="none" stroke="#06063a" stroke-width="1.3"/><path d="M233.8,105.7 l-1.2,1.8 h2.4 z M239.8,112.1 l-1.8,-1.2 v2.4 z" fill="#06063a"/>
<text x="246.9" y="112.8" font-size="8" fill="#111" textLength="74.2" lengthAdjust="spacingAndGlyphs" stroke="#111" stroke-width="0.18" >Системный вид (1:1)</text>
<rect x="230.4" y="117.8" width="12.4" height="12.2" fill="#04e8f8" stroke="#7a52c8" stroke-width="0.9"/>
<path d="M233.8,121.2 V126.39999999999999 H238.4" fill="none" stroke="#06063a" stroke-width="1.3"/><path d="M233.8,120.0 l-1.2,1.8 h2.4 z M239.8,126.39999999999999 l-1.8,-1.2 v2.4 z" fill="#06063a"/>
<text x="246.9" y="126.8" font-size="8" fill="#111" textLength="68.3" lengthAdjust="spacingAndGlyphs" stroke="#111" stroke-width="0.18" >(т) Спереди 1 (1:1)</text>
<rect x="230.4" y="132" width="12.4" height="12.2" fill="#04e8f8" stroke="#7a52c8" stroke-width="0.9"/>
<path d="M233.8,135.4 V140.6 H238.4" fill="none" stroke="#06063a" stroke-width="1.3"/><path d="M233.8,134.2 l-1.2,1.8 h2.4 z M239.8,140.6 l-1.8,-1.2 v2.4 z" fill="#06063a"/>
<text x="246.9" y="140.9" font-size="8" fill="#111" textLength="58.1" lengthAdjust="spacingAndGlyphs" stroke="#111" stroke-width="0.18" >Разрез А-А (1:1)</text>
<rect x="217.7" y="121.4" width="6" height="6" fill="#fcfcfc" stroke="#8aa4cc" stroke-width="0.8"/><path d="M219,124.4 h3.4 M220.7,122.7 v3.4" stroke="#111" stroke-width="0.9"/>
<rect x="217.7" y="135.4" width="6" height="6" fill="#fcfcfc" stroke="#8aa4cc" stroke-width="0.8"/><path d="M219,138.4 h3.4 M220.7,136.70000000000002 v3.4" stroke="#111" stroke-width="0.9"/>
<text x="213.6" y="633.8" font-size="8" fill="#111" textLength="42.4" lengthAdjust="spacingAndGlyphs" stroke="#111" stroke-width="0.18" >Построение</text>
<text x="194" y="696.4" font-size="8" fill="#111" textLength="409" lengthAdjust="spacingAndGlyphs" stroke="#111" stroke-width="0.18" >Щелкните левой кнопкой мыши на объекте для его выделения (вместе с Ctrl или Shift - добавить к выделенным)</text>
<g transform="translate(198.6,703.2) scale(1.12)"><path d="M0.4,1.6 Q2.6,0.2 4.8,1.4 L4.2,5.2 Q2.2,4.2 0,5.4 Z" fill="#f05a28"/><path d="M5.8,1.6 Q8,2.8 10.6,1.2 L10,5.2 Q7.6,6.6 5.2,5.4 Z" fill="#7ac83c"/><path d="M-0.2,6.4 Q2,5.2 4,6.2 L3.4,10 Q1.4,9 -0.8,10.2 Z" fill="#3a8af0"/><path d="M5,6.6 Q7.4,7.8 9.8,6.4 L9.2,10.2 Q6.8,11.6 4.4,10.4 Z" fill="#f8d020"/></g>
<text x="214.6" y="713.2" font-size="12.2" fill="#fff" textLength="25.8" lengthAdjust="spacingAndGlyphs" font-weight="bold" font-style="italic" style="text-shadow:1px 1px 1px #1a4a1a">пуск</text>
<rect x="271.4" y="704.2" width="10.4" height="10.6" fill="#1c28e0" stroke="#e8ecff" stroke-width="0.9"/><path d="M273.6,706.6 h2.8 v2.6 h-2.8 z M277,710.2 h2.8 v2.6 h-2.8 z M273.6,712.6 h2" fill="none" stroke="#fff" stroke-width="0.8"/>
<text x="285.4" y="712.8" font-size="8" fill="#fff" textLength="26.6" lengthAdjust="spacingAndGlyphs" stroke="#fff" stroke-width="0.18" >Flashing</text>
<circle cx="389.2" cy="709.8" r="5" fill="#3a8ad8" stroke="#cfe2f8" stroke-width="0.9"/><path d="M387.4,707 v5.6 M391.4,707 l-3.4,2.8 l3.4,2.8" fill="none" stroke="#fff" stroke-width="1.1"/>
<text x="397.2" y="712.8" font-size="8" fill="#fff" textLength="81" lengthAdjust="spacingAndGlyphs" stroke="#fff" stroke-width="0.18" >КОМПАС-3D V12 - [Ч...</text>
<text x="956" y="712.6" font-size="7.4" fill="#fff" textLength="8.6" lengthAdjust="spacingAndGlyphs" stroke="#fff" stroke-width="0.18" >RL</text>
<circle cx="974" cy="709.8" r="5.4" fill="#2a86ee" stroke="#d8ecff" stroke-width="0.9"/><path d="M975.4,707.2 L972.8,709.8 L975.4,712.4" fill="none" stroke="#fff" stroke-width="1.5"/>
<rect x="982.2" y="704.4" width="10.4" height="10.6" fill="#1c2ee0" stroke="#dfe6ff" stroke-width="0.9"/><path d="M984.4,706.8 h2.8 v2.6 h-2.8 z M987.8,710.4 h2.8 v2.6 h-2.8 z M984.4,712.8 h2" fill="none" stroke="#fff" stroke-width="0.8"/>
<g transform="translate(995,704.4)"><rect x="3.6" y="0.4" width="5.6" height="4.6" fill="#9ad4f4" stroke="#e8f0f8" stroke-width="0.7"/><rect x="0.4" y="4" width="5.6" height="4.6" fill="#9ad4f4" stroke="#e8f0f8" stroke-width="0.7"/><path d="M1.6,9.8 h3.4 M4.8,6 h3.4" stroke="#d0d8e0" stroke-width="1"/></g>
<g transform="translate(1007,704.4)"><rect x="3.6" y="0.4" width="5.6" height="4.6" fill="#5a5a78" stroke="#e8f0f8" stroke-width="0.7"/><rect x="0.4" y="4" width="5.6" height="4.6" fill="#5a5a78" stroke="#e8f0f8" stroke-width="0.7"/><path d="M1.6,9.8 h3.4 M4.8,6 h3.4" stroke="#d0d8e0" stroke-width="1"/></g>
<g transform="translate(1019.6,704.2)"><path d="M0.4,0.2 V10.6 M0.6,5.6 L5.6,0.2 M1.8,4.6 L6.2,10.6" fill="none" stroke="#f01010" stroke-width="2.2"/><rect x="5.4" y="5.6" width="4.4" height="4.8" fill="#181818"/></g>
<g transform="translate(1032,704.4)"><rect x="0.4" y="0.6" width="9.4" height="9.8" rx="1.4" fill="#f4eef2" stroke="#c05070" stroke-width="1"/><path d="M3,8.4 L5,2.6 L7,8.4 M3.8,6.2 h2.6" fill="none" stroke="#b03058" stroke-width="0.9"/></g>
<g transform="translate(1045,704)"><path d="M0.4,0.6 H10 V6 Q9,10 5.2,11.6 Q1.4,10 0.4,6 Z" fill="#181870" stroke="#0c0c40" stroke-width="0.6"/><path d="M5.2,2 V9 M3,3.6 V5.6 L5.2,7 M7.4,3.2 V5.2 L5.2,6.4" fill="none" stroke="#e8ecff" stroke-width="0.9"/></g>
<text x="1061.2" y="712.8" font-size="8" fill="#fff" textLength="19" lengthAdjust="spacingAndGlyphs" stroke="#fff" stroke-width="0.18" >14:32</text>
<defs>
<clipPath id="hc1"><path clip-rule="evenodd" d="M403,275 C405,281 408,288 410.6,294 C411.5,301 410.2,311 410.6,319 C411,323 413,325.5 416,326.5 C424,329 431,330.3 438.8,330.9 C447,332 456,333 464.8,332.5 C470,332 473.5,330 476.7,327.6 C480,325 482.5,322.5 484.3,319 C487.5,314 489.5,309 490.8,303.8 C492,299 492.3,294 491.9,289.7 C491.5,284 490,279 488,275 Z M425.8,275 H472 V327.4 H425.8 Z"/></clipPath>
<clipPath id="hc2"><path clip-rule="evenodd" d="M819.3,266.8 C813,271 807,277 803.6,283.9 C800.5,288.5 799.3,293 799.3,297.5 C799.3,303 801.5,308 803.6,312.4 C806,317 808.5,321.5 810.4,326 C813,333 815.5,340.5 817.9,347.8 H854.6 V266.8 Z M854.6,298.5 H819.7 V300.5 L815.2,307.5 L819.7,314.5 V316.2 H854.6 Z"/><rect x="872" y="266.8" width="49.7" height="31.7"/><rect x="872" y="316.2" width="49.7" height="31.6"/></clipPath>
<clipPath id="hc3"><path d="M934.4,307.2 H1051.1 A58.35,58.4 0 0 1 934.4,307.2 Z"/></clipPath>
</defs>
<g fill="none" stroke="#3e3e3e" stroke-width="1.45" stroke-dasharray="1.6 2.68">
<rect x="391" y="243.9" width="537.3" height="127.5"/>
<rect x="929.2" y="302.6" width="128.4" height="69"/>
</g>
<path clip-path="url(#hc1)" d="M331.9,336 L395.9,272 M344.3,336 L408.3,272 M356.6,336 L420.6,272 M369.0,336 L433.0,272 M381.4,336 L445.4,272 M393.7,336 L457.7,272 M406.1,336 L470.1,272 M418.5,336 L482.5,272 M430.9,336 L494.9,272 M443.2,336 L507.2,272 M455.6,336 L519.6,272 M468.0,336 L532.0,272 M480.3,336 L544.3,272 M492.7,336 L556.7,272 M505.1,336 L569.1,272" stroke="#2a2a2a" stroke-width="0.75" fill="none"/>
<path clip-path="url(#hc2)" d="M701.6,350 L787.6,264 M713.9,350 L799.9,264 M726.3,350 L812.3,264 M738.7,350 L824.7,264 M751.1,350 L837.1,264 M763.4,350 L849.4,264 M775.8,350 L861.8,264 M788.2,350 L874.2,264 M800.5,350 L886.5,264 M812.9,350 L898.9,264 M825.3,350 L911.3,264 M837.6,350 L923.6,264 M850.0,350 L936.0,264 M862.4,350 L948.4,264 M874.8,350 L960.8,264 M887.1,350 L973.1,264 M899.5,350 L985.5,264 M911.9,350 L997.9,264 M924.2,350 L1010.2,264 M936.6,350 L1022.6,264" stroke="#2a2a2a" stroke-width="0.75" fill="none"/>
<path clip-path="url(#hc3)" d="M857.2,368 L920.2,305 M869.6,368 L932.6,305 M881.9,368 L944.9,305 M894.3,368 L957.3,305 M906.7,368 L969.7,305 M919.0,368 L982.0,305 M931.4,368 L994.4,305 M943.8,368 L1006.8,305 M956.1,368 L1019.1,305 M968.5,368 L1031.5,305 M980.9,368 L1043.9,305 M993.2,368 L1056.2,305 M1005.6,368 L1068.6,305 M1018.0,368 L1081.0,305 M1030.4,368 L1093.4,305 M1042.7,368 L1105.7,305 M1055.1,368 L1118.1,305" stroke="#2a2a2a" stroke-width="0.75" fill="none"/>
<path d="M403,275 C405,281 408,288 410.6,294 C411.5,301 410.2,311 410.6,319 C411,323 413,325.5 416,326.5 C424,329 431,330.3 438.8,330.9 C447,332 456,333 464.8,332.5 C470,332 473.5,330 476.7,327.6 C480,325 482.5,322.5 484.3,319 C487.5,314 489.5,309 490.8,303.8 C492,299 492.3,294 491.9,289.7 C491.5,284 490,279 488,275" fill="none" stroke="#333" stroke-width="0.8"/>
<path d="M819.3,266.8 C813,271 807,277 803.6,283.9 C800.5,288.5 799.3,293 799.3,297.5 C799.3,303 801.5,308 803.6,312.4 C806,317 808.5,321.5 810.4,326 C813,333 815.5,340.5 817.9,347.8" fill="none" stroke="#333" stroke-width="0.8"/>
<path d="M397.5,307.8 H410 M398.5,277 V289" fill="none" stroke="#b8b8b8" stroke-width="0.8"/>
<path d="M414,308 h6 M421,303 l2,4" fill="none" stroke="#9a9a9a" stroke-width="0.8"/>
<g fill="none" stroke="#1414ff" stroke-width="1.5" stroke-linejoin="miter">
<path d="M425.8,275.2 H396.3 V339.3 H527.8 M472,275.2 H527.8 M425.8,275.2 V327.4 H472 V275.2 M425.8,285.3 H472"/>
<rect x="527.8" y="266.7" width="96.2" height="81.1"/>
<path d="M624,270.7 H629.6 M624,344 H629.6"/>
<path d="M629.6,249.3 H687.8 V307 H723.3 V249.3 H775.6 V365.6 H629.6 Z"/>
<rect x="775.6" y="266.8" width="146.1" height="81"/>
<path d="M854.6,266.8 V298.5 L872,316.2 V347.8 M872,266.8 V298.5 L854.6,316.2 V347.8"/>
<path d="M854.6,298.5 H819.7 V316.2 H854.6 M872,298.5 H921.7 M872,316.2 H921.7"/>
</g>
<path d="M819.7,300.8 L815.4,307.5 L819.7,314.2" fill="none" stroke="#1414ff" stroke-width="1"/>
<path d="M934.4,307.2 H1051.1 A58.35,58.4 0 0 1 934.4,307.2 Z" fill="none" stroke="#111" stroke-width="1.6" stroke-linejoin="round"/>
<line x1="703" y1="191.7" x2="703" y2="228" stroke="#009696" stroke-width="2"/>
<line x1="659.2" y1="201.5" x2="690" y2="201.5" stroke="#222" stroke-width="0.9"/>
<path d="M681.3,198.7 L701.8,201.5 L681.3,204.3 L684,201.5 Z" fill="#111"/>
<line x1="703" y1="398" x2="703" y2="434.6" stroke="#009696" stroke-width="2"/>
<line x1="659.2" y1="425.1" x2="690" y2="425.1" stroke="#222" stroke-width="0.9"/>
<path d="M681.3,422.3 L701.8,425.1 L681.3,427.90000000000003 L684,425.1 Z" fill="#111"/>
<text x="661" y="191.2" font-size="38.5" style="font-family:'DejaVu Sans Light','DejaVu Sans','Liberation Sans',sans-serif;font-weight:200" fill="#111" stroke="#111" stroke-width="0.8" textLength="15.6" lengthAdjust="spacingAndGlyphs">А</text>
<text x="661" y="456.6" font-size="38.5" style="font-family:'DejaVu Sans Light','DejaVu Sans','Liberation Sans',sans-serif;font-weight:200" fill="#111" stroke="#111" stroke-width="0.8" textLength="15.6" lengthAdjust="spacingAndGlyphs">А</text>
<text y="234.4" font-size="38.5" style="font-family:'DejaVu Sans Light','DejaVu Sans','Liberation Sans',sans-serif;font-weight:200" fill="#111" stroke="#111" stroke-width="0.8"><tspan x="965.6" textLength="15.6" lengthAdjust="spacingAndGlyphs">А</tspan><tspan x="984.2" textLength="16" lengthAdjust="spacingAndGlyphs">–</tspan><tspan x="1003" textLength="15.6" lengthAdjust="spacingAndGlyphs">А</tspan></text>
</svg>
</body>
</html>
